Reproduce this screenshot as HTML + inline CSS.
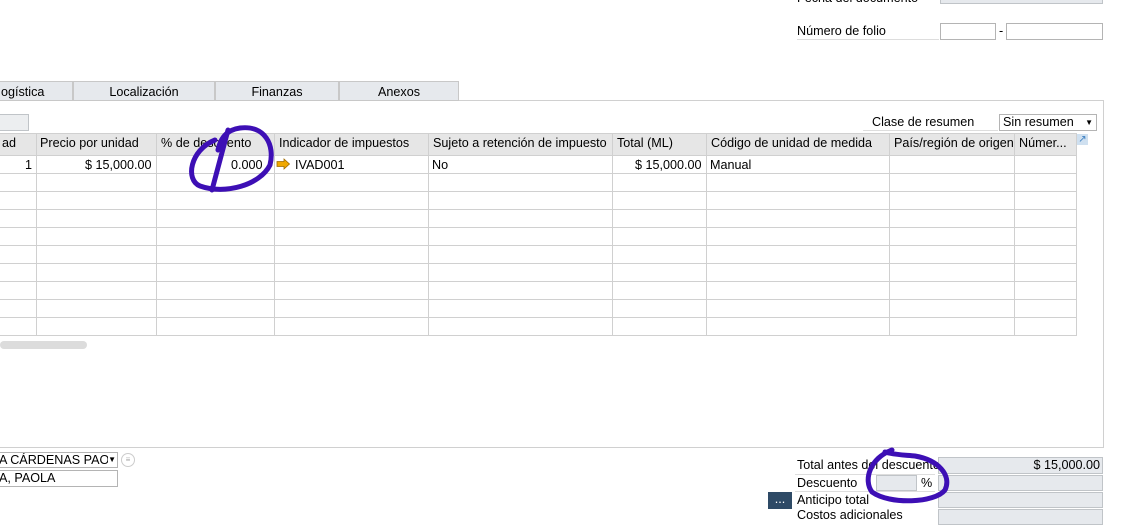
<!DOCTYPE html>
<html><head><style>
body{margin:0;width:1123px;height:515px;overflow:hidden;background:#fff;font-family:"Liberation Sans",sans-serif;font-size:12.6px;color:#000;position:relative}
.a{position:absolute;white-space:nowrap}
.inp{position:absolute;border:1px solid #b4b4b4;background:#fff;box-sizing:border-box}
.ro{position:absolute;border:1px solid #c0c4c8;background:#e6e9ed;box-sizing:border-box}
.tab{position:absolute;top:81px;height:20px;background:#e6e9ed;border:1px solid #c8c8c8;box-sizing:border-box;text-align:center;line-height:21px}
.v{position:absolute;width:1px;background:#d0d0d0}
.h{position:absolute;height:1px;background:#d0d0d0;left:0;width:1077px}
</style></head><body>
<div class="a" style="left:797px;top:-9px">Fecha del documento</div>
<div class="ro" style="left:940px;top:-6px;width:163px;height:10px"></div>
<div class="a" style="left:797px;top:24px">Número de folio</div>
<div class="a" style="left:797px;top:39px;width:142px;height:1px;background:#ddd"></div>
<div class="inp" style="left:940px;top:23px;width:56px;height:17px"></div>
<div class="a" style="left:999px;top:24px">-</div>
<div class="inp" style="left:1006px;top:23px;width:97px;height:17px"></div>

<div class="tab" style="left:-2px;width:75px;text-align:left;padding-left:2px">ogística</div>
<div class="tab" style="left:73px;width:142px">Localización</div>
<div class="tab" style="left:215px;width:124px">Finanzas</div>
<div class="tab" style="left:339px;width:120px">Anexos</div>
<div class="a" style="left:459px;top:100px;width:645px;height:348px;border:1px solid #d0d0d0;border-left:none;box-sizing:border-box"></div>
<div class="a" style="left:0;top:447px;width:460px;height:1px;background:#d0d0d0"></div>

<div class="ro" style="left:-2px;top:114px;width:31px;height:17px;background:#eceef0"></div>
<div class="a" style="left:872px;top:115px">Clase de resumen</div>
<div class="a" style="left:863px;top:130px;width:135px;height:1px;background:#ddd"></div>
<div class="inp" style="left:999px;top:114px;width:98px;height:17px;padding-left:3px;line-height:15px">Sin resumen<span style="position:absolute;right:3px;top:0;font-size:8px">▼</span></div>

<div class="a" style="left:0;top:133px;width:1077px;height:22px;background:#e6e6e6"></div>
<div class="h" style="top:133px"></div><div class="h" style="top:155px"></div>
<div class="h" style="top:173px"></div><div class="h" style="top:191px"></div><div class="h" style="top:209px"></div><div class="h" style="top:227px"></div><div class="h" style="top:245px"></div><div class="h" style="top:263px"></div><div class="h" style="top:281px"></div><div class="h" style="top:299px"></div><div class="h" style="top:317px"></div><div class="h" style="top:335px"></div>
<div class="v" style="left:36px;top:133px;height:203px"></div>
<div class="v" style="left:156px;top:133px;height:203px"></div>
<div class="v" style="left:274px;top:133px;height:203px"></div>
<div class="v" style="left:428px;top:133px;height:203px"></div>
<div class="v" style="left:612px;top:133px;height:203px"></div>
<div class="v" style="left:706px;top:133px;height:203px"></div>
<div class="v" style="left:889px;top:133px;height:203px"></div>
<div class="v" style="left:1014px;top:133px;height:203px"></div>
<div class="v" style="left:1076px;top:133px;height:203px"></div>
<div class="a" style="left:2px;top:136px">ad</div>
<div class="a" style="left:40px;top:136px">Precio por unidad</div>
<div class="a" style="left:161px;top:136px">% de descuento</div>
<div class="a" style="left:279px;top:136px">Indicador de impuestos</div>
<div class="a" style="left:433px;top:136px">Sujeto a retención de impuesto</div>
<div class="a" style="left:617px;top:136px">Total (ML)</div>
<div class="a" style="left:711px;top:136px">Código de unidad de medida</div>
<div class="a" style="left:894px;top:136px">País/región de origen</div>
<div class="a" style="left:1019px;top:136px">Númer...</div>
<div class="a" style="left:1077px;top:134px;width:11px;height:11px;background:#cfe0f0;color:#3a7ec0;font-size:10px;line-height:11px;text-align:center">↗</div>
<div class="a" style="left:25px;top:158px">1</div>
<div class="a" style="left:85px;top:158px">$ 15,000.00</div>
<div class="a" style="left:231px;top:158px">0.000</div>
<svg class="a" style="left:276px;top:158px" width="15" height="12"><path d="M1 3.5h7V1l5.5 5L8 11V8.5H1z" fill="#f0a800" stroke="#a06a00" stroke-width="0.8"/></svg>
<div class="a" style="left:295px;top:158px">IVAD001</div>
<div class="a" style="left:432px;top:158px">No</div>
<div class="a" style="left:635px;top:158px">$ 15,000.00</div>
<div class="a" style="left:710px;top:158px">Manual</div>
<div class="a" style="left:0;top:341px;width:87px;height:8px;background:#dcdcdc;border-radius:4px"></div>

<div class="inp" style="left:-2px;top:452px;width:120px;height:16px;line-height:14px;overflow:hidden">A CÁRDENAS PAOL<span style="position:absolute;right:1px;top:0;font-size:8px;background:#fff">▼</span></div>
<div class="a" style="left:121px;top:453px;width:12px;height:12px;border:1px solid #ccc;border-radius:7px;font-size:8px;text-align:center;line-height:12px;color:#aaa">≡</div>
<div class="inp" style="left:-2px;top:470px;width:120px;height:17px;line-height:15px">A, PAOLA</div>

<div class="a" style="left:797px;top:458px">Total antes del descuento</div>
<div class="ro" style="left:938px;top:457px;width:165px;height:17px;text-align:right;padding-right:2px;line-height:15px">$ 15,000.00</div>
<div class="a" style="left:795px;top:474px;width:140px;height:1px;background:#ddd"></div>
<div class="a" style="left:797px;top:476px">Descuento</div>
<div class="ro" style="left:876px;top:475px;width:41px;height:16px"></div>
<div class="a" style="left:921px;top:476px">%</div>
<div class="ro" style="left:938px;top:475px;width:165px;height:16px"></div>
<div class="a" style="left:795px;top:491px;width:140px;height:1px;background:#ddd"></div>
<div class="a" style="left:768px;top:492px;width:24px;height:17px;background:#2e4a66;color:#fff;text-align:center;line-height:14px">...</div>
<div class="a" style="left:797px;top:493px">Anticipo total</div>
<div class="ro" style="left:938px;top:492px;width:165px;height:16px"></div>
<div class="a" style="left:797px;top:508px">Costos adicionales</div>
<div class="ro" style="left:938px;top:509px;width:165px;height:16px"></div>

<svg class="a" style="left:0;top:0" width="1123" height="515">
<g fill="none" stroke="#3d0fb5" stroke-width="5" stroke-linecap="round">
<path d="M215 140 C190 150,185 180,200 186 C225 195,260 185,270 165 C275 145,265 125,240 128 C225 130,220 140,218 150"/>
<path d="M228 130 L212 190"/>
<path d="M892 450 C870 458,863 480,872 492 C890 505,935 503,945 490 C952 475,938 460,915 456 C905 455,895 455,885 452"/>
</g></svg>
</body></html>
